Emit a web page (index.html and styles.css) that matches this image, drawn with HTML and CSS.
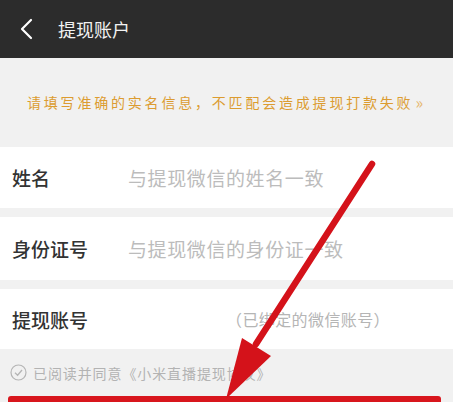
FILE: index.html
```html
<!DOCTYPE html>
<html lang="zh-CN">
<head>
    <meta charset="UTF-8">
    <meta name="viewport" content="width=device-width, initial-scale=1.0">
    <title>提现账户</title>
    <link rel="stylesheet" href="styles.css">
</head>
<body>
    <div class="page">
        <div class="header">
            <svg class="back" width="14" height="22" viewBox="0 0 14 22">
                <path d="M12 2 L3 11 L12 20" fill="none" stroke="#fff" stroke-width="2.2" stroke-linecap="round" stroke-linejoin="round"/>
            </svg>
            <span class="title">提现账户</span>
        </div>

        <div class="notice">请填写准确的实名信息，不匹配会造成提现打款失败 <span class="more">»</span></div>

        <div class="row">
            <span class="label">姓名</span>
            <span class="placeholder">与提现微信的姓名一致</span>
        </div>
        <div class="row">
            <span class="label">身份证号</span>
            <span class="placeholder">与提现微信的身份证一致</span>
        </div>
        <div class="row row-account">
            <span class="label">提现账号</span>
            <span class="placeholder small">（已绑定的微信账号）</span>
        </div>

        <div class="agree">
            <svg width="17" height="17" viewBox="0 0 17 17">
                <circle cx="8.5" cy="8.5" r="7.5" fill="none" stroke="#b5b5b5" stroke-width="1.2"/>
                <path d="M5 8.8 L7.6 11.2 L12 6" fill="none" stroke="#b5b5b5" stroke-width="1.3"/>
            </svg>
            <span>已阅读并同意《小米直播提现协议》</span>
        </div>

        <div class="submit"></div>

        <svg class="arrow" width="453" height="402" viewBox="0 0 453 402">
            <line x1="372" y1="164" x2="256" y2="344" stroke="#d4121a" stroke-width="6.5" stroke-linecap="round"/>
            <polygon points="242,338 271,356 226,399" fill="#d4121a"/>
        </svg>
    </div>
</body>
</html>
```

FILE: styles.css
```css
body {
    margin: 0;
    font-family: "Noto Sans CJK SC", "Liberation Sans", sans-serif;
    background-color: #f1f1f1;
}
.page {
    position: relative;
    width: 453px;
    height: 402px;
    overflow: hidden;
    background-color: #f1f1f1;
}
.header {
    height: 58px;
    background-color: #2c2c2c;
    display: flex;
    align-items: center;
    padding-left: 19px;
    box-sizing: border-box;
}
.back {
    margin-right: 25px;
}
.title {
    color: #f2f2f2;
    font-size: 18px;
}
.notice {
    height: 89px;
    display: flex;
    align-items: center;
    padding-left: 27px;
    padding-bottom: 1px;
    box-sizing: border-box;
    color: #dc9c30;
    font-size: 14px;
    letter-spacing: 2.8px;
}
.notice .more {
    color: #e6b770;
    letter-spacing: 0;
    font-size: 16px;
    margin-left: 2px;
}
.row {
    height: 61px;
    background-color: #fff;
    display: flex;
    align-items: center;
    margin-bottom: 9px;
}
.row + .row {
    height: 63px;
}
.row.row-account {
    height: 60px;
    margin-bottom: 0;
}
.label {
    width: 128px;
    padding-left: 12px;
    box-sizing: border-box;
    font-size: 19px;
    color: #333;
    font-weight: 500;
}
.placeholder {
    font-size: 19px;
    letter-spacing: 0.6px;
    color: #bcbcbc;
}
.placeholder.small {
    font-size: 16px;
    letter-spacing: 0.4px;
    margin-left: 98px;
    color: #b5b5b5;
}
.agree {
    height: 47px;
    display: flex;
    align-items: center;
    padding-left: 10px;
    font-size: 14px;
    color: #b3b3b3;
    letter-spacing: 0.9px;
}
.agree svg {
    margin-right: 6px;
}
.submit {
    margin: 0 12px 0 8px;
    height: 20px;
    background-color: #d8161d;
    border-radius: 3px 3px 0 0;
}
.arrow {
    position: absolute;
    top: 0;
    left: 0;
}
```
